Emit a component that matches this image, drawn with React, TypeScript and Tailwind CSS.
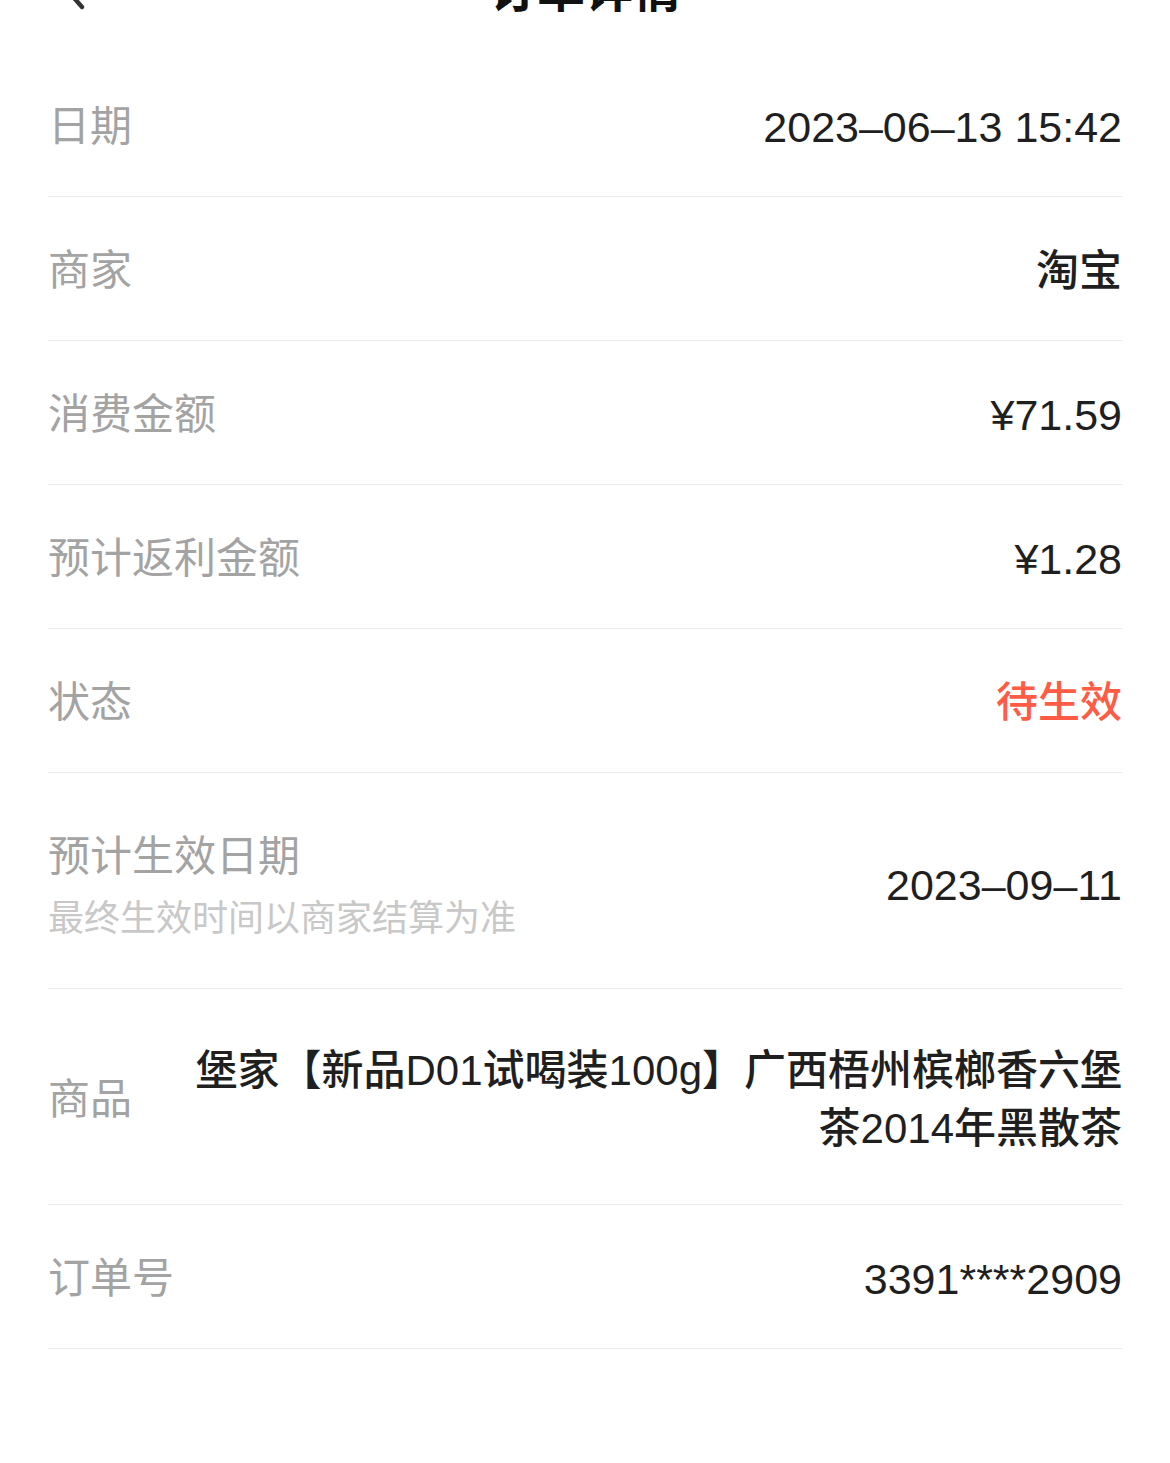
import React from "react";

const font = { fontFamily: '"Liberation Sans", "Noto Sans CJK SC", sans-serif' };

function Row({ label, children }: { label: string; children: React.ReactNode }) {
  return (
    <div className="flex h-[144px] items-center justify-between border-b border-[#ebebeb] pt-[4px]">
      <div className="text-[42px] leading-[56px] text-[#a3a3a3]">{label}</div>
      <div className="text-[43px] leading-[56px] font-medium text-[#1f1f1f]">{children}</div>
    </div>
  );
}

export default function App() {
  return (
    <div className="min-h-[1463px] bg-white overflow-hidden" style={font}>
      {/* header, mostly scrolled off */}
      <div className="relative -mt-[67px] flex h-[120px] items-center justify-center">
        <svg
          className="absolute left-[52px] top-[34px]"
          width="48"
          height="48"
          viewBox="0 0 24 24"
          fill="none"
          stroke="#333"
          strokeWidth="2.2"
          strokeLinecap="round"
          strokeLinejoin="round"
        >
          <path d="M15 4 L8 12 L15 20" />
        </svg>
        <div className="-mt-[4px] text-[48px] font-bold text-[#111]">订单详情</div>
      </div>

      <div className="px-12">
        <Row label="日期">2023–06–13 15:42</Row>
        <Row label="商家">淘宝</Row>
        <Row label="消费金额">¥71.59</Row>
        <Row label="预计返利金额">¥1.28</Row>
        <Row label="状态">
          <span className="text-[42px] text-[#ff5b45]">待生效</span>
        </Row>

        <div className="flex h-[216px] items-center justify-between border-b border-[#ebebeb] pt-[8px]">
          <div className="flex flex-col">
            <div className="text-[42px] leading-[60px] text-[#a3a3a3]">预计生效日期</div>
            <div className="mt-[8px] text-[36px] leading-[48px] text-[#c8c8c8]">最终生效时间以商家结算为准</div>
          </div>
          <div className="text-[43px] leading-[56px] font-medium text-[#1f1f1f]">2023–09–11</div>
        </div>

        <div className="flex h-[216px] items-center justify-between border-b border-[#ebebeb] pt-[6px]">
          <div className="shrink-0 text-[42px] leading-[56px] text-[#a3a3a3]">商品</div>
          <div className="max-w-[930px] text-right text-[42px] leading-[58px] font-medium text-[#1f1f1f]">
            堡家【新品D01试喝装100g】广西梧州槟榔香六堡茶2014年黑散茶
          </div>
        </div>

        <Row label="订单号">3391****2909</Row>
      </div>
    </div>
  );
}
